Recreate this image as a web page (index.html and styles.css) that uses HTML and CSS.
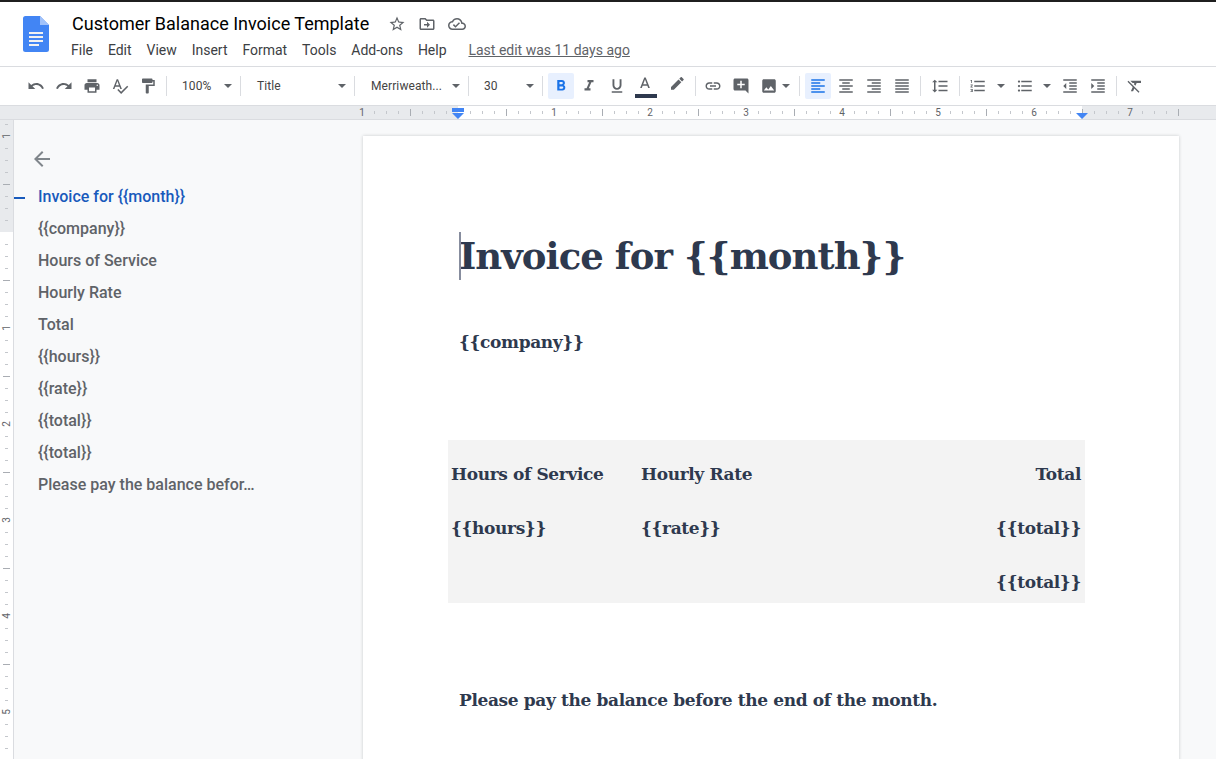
FILE: index.html
```html
<!DOCTYPE html>
<html lang="en">
<head>
  <meta charset="UTF-8" />
  <title>Customer Balanace Invoice Template - Google Docs</title>
  <link rel="stylesheet" href="styles.css">
</head>
<body>

  <header class="titlebar">
    <svg class="doc-logo" viewBox="0 0 26 36" width="26" height="36">
      <path fill="#4285f4" d="M2.5 0H17l9 9v24.5a2.5 2.5 0 0 1-2.5 2.5h-21A2.5 2.5 0 0 1 0 33.500v-31A2.500 2.500 0 0 1 2.500 0z"/>
      <path fill="#a1c2fa" d="M17 0l9 9h-9z"/>
      <path fill="#f1f1f1" d="M6 16h14v2H6zM6 20h14v2H6zM6 24h14v2H6zM6 28h10v2H6z"/>
    </svg>
    <div class="titlebar-main">
      <div class="doc-title-row">
        <span class="doc-title">Customer Balanace Invoice Template</span>
        <svg class="title-icon star" viewBox="0 0 24 24"><path d="M22 9.240l-7.190-.62L12 2 9.190 8.630 2 9.240l5.460 4.730L5.820 21 12 17.270 18.180 21l-1.630-7.030L22 9.240zM12 15.400l-3.760 2.270 1-4.280-3.320-2.880 4.380-.38L12 6.100l1.710 4.040 4.380.38-3.320 2.880 1 4.280L12 15.400z"/></svg>
        <svg class="title-icon" viewBox="0 0 24 24"><path d="M20 6h-8l-2-2H4c-1.100 0-2 .9-2 2v12c0 1.100.9 2 2 2h16c1.100 0 2-.9 2-2V8c0-1.100-.9-2-2-2zm0 12H4V6h5.170l2 2H20v10zm-8-1l4-4-4-4v3H8v2h4v3z"/></svg>
        <svg class="title-icon" viewBox="0 0 24 24"><path d="M19.350 10.040C18.670 6.590 15.640 4 12 4 9.110 4 6.600 5.640 5.350 8.040 2.340 8.360 0 10.910 0 14c0 3.310 2.690 6 6 6h13c2.760 0 5-2.240 5-5 0-2.640-2.050-4.780-4.650-4.960zM19 18H6c-2.210 0-4-1.790-4-4 0-2.050 1.530-3.760 3.560-3.970l1.070-.11.5-.95C8.080 7.140 9.940 6 12 6c2.620 0 4.880 1.860 5.390 4.430l.3 1.500 1.530.11c1.560.1 2.780 1.410 2.780 2.960 0 1.650-1.350 3-3 3zm-9-3.820l-2.090-2.090L6.500 13.500 10 17l6.010-6.010-1.410-1.410z"/></svg>
      </div>
      <nav class="menubar">
        <a>File</a>
        <a>Edit</a>
        <a>View</a>
        <a>Insert</a>
        <a>Format</a>
        <a>Tools</a>
        <a>Add-ons</a>
        <a>Help</a>
        <a class="last-edit">Last edit was 11 days ago</a>
      </nav>
    </div>
  </header>

  <div class="toolbar">
    <button class="tb"><svg viewBox="0 0 24 24"><path d="M12.500 8c-2.650 0-5.050.99-6.900 2.600L2 7v9h9l-3.620-3.620c1.390-1.160 3.160-1.880 5.120-1.880 3.540 0 6.550 2.310 7.600 5.500l2.370-.78C21.080 11.030 17.150 8 12.500 8z"/></svg></button>
    <button class="tb"><svg viewBox="0 0 24 24"><path d="M18.400 10.600C16.550 8.990 14.150 8 11.500 8c-4.650 0-8.580 3.030-9.960 7.220L3.900 16c1.050-3.190 4.050-5.500 7.600-5.500 1.950 0 3.730.72 5.120 1.880L13 16h9V7l-3.600 3.600z"/></svg></button>
    <button class="tb"><svg viewBox="0 0 24 24"><path d="M19 8H5c-1.660 0-3 1.340-3 3v6h4v4h12v-4h4v-6c0-1.660-1.340-3-3-3zm-3 11H8v-5h8v5zm3-7c-.55 0-1-.45-1-1s.45-1 1-1 1 .45 1 1-.45 1-1 1zm-1-9H6v4h12V3z"/></svg></button>
    <button class="tb"><svg viewBox="0 0 24 24"><path d="M12.450 16h2.090L9.430 3H7.570L2.460 16h2.090l1.120-3h5.640l1.140 3zm-6.020-5L8.500 5.480 10.570 11H6.430zm15.160.59l-8.090 8.090L9.830 16l-1.410 1.410 5.090 5.090L23 13l-1.410-1.410z"/></svg></button>
    <button class="tb"><svg viewBox="0 0 24 24"><path d="M18 4V3c0-.55-.45-1-1-1H5c-.55 0-1 .45-1 1v4c0 .55.45 1 1 1h12c.55 0 1-.45 1-1V6h1v4H9v11c0 .55.45 1 1 1h2c.55 0 1-.45 1-1v-9h8V4h-3z"/></svg></button>
    <span class="sep sep-left"></span>
    <div class="select w-zoom"><span>100%</span><i class="caret"></i></div>
    <span class="sep"></span>
    <div class="select w-wide"><span>Title</span><i class="caret"></i></div>
    <span class="sep"></span>
    <div class="select w-wide"><span>Merriweath...</span><i class="caret"></i></div>
    <span class="sep"></span>
    <div class="select w-zoom"><span>30</span><i class="caret"></i></div>
    <span class="sep sep-right"></span>
    <button class="tb active"><svg viewBox="0 0 24 24"><path d="M15.600 10.790c.97-.67 1.650-1.770 1.650-2.790 0-2.260-1.750-4-4-4H7v14h7.040c2.090 0 3.710-1.700 3.710-3.790 0-1.520-.86-2.820-2.150-3.420zM10 6.500h3c.83 0 1.500.67 1.500 1.500s-.67 1.500-1.500 1.500h-3v-3zm3.500 9H10v-3h3.500c.83 0 1.500.67 1.500 1.500s-.67 1.500-1.500 1.500z"/></svg></button>
    <button class="tb"><svg viewBox="0 0 24 24"><path d="M10 4v3h2.210l-3.420 8H6v3h8v-3h-2.210l3.420-8H18V4z"/></svg></button>
    <button class="tb"><svg viewBox="0 0 24 24"><path d="M12 17c3.310 0 6-2.690 6-6V3h-2.500v8c0 1.930-1.570 3.500-3.500 3.500S8.500 12.930 8.500 11V3H6v8c0 3.310 2.690 6 6 6zm-7 2v2h14v-2H5z"/></svg></button>
    <button class="tb text-color"><svg viewBox="0 0 24 24"><path d="M11 2L5.500 16h2.250l1.120-3h6.250l1.120 3h2.250L13 2h-2zm-1.380 9L12 4.670 14.380 11H9.620z"/></svg><i class="color-bar"></i></button>
    <button class="tb highlight"><svg viewBox="0 0 24 24"><path d="M17.750 7L14 3.250l-10 10V17h3.750l10-10zm2.960-2.960c.39-.39.39-1.020 0-1.410L18.370.29c-.39-.39-1.020-.39-1.410 0L15 2.250 18.750 6l1.960-1.960z"/></svg></button>
    <span class="sep sep-marker"></span>
    <button class="tb"><svg viewBox="0 0 24 24"><path d="M3.900 12c0-1.710 1.390-3.100 3.100-3.100h4V7H7c-2.760 0-5 2.240-5 5s2.240 5 5 5h4v-1.900H7c-1.710 0-3.100-1.390-3.100-3.100zM8 13h8v-2H8v2zm9-6h-4v1.900h4c1.710 0 3.100 1.390 3.100 3.100s-1.390 3.100-3.100 3.100h-4V17h4c2.760 0 5-2.240 5-5s-2.240-5-5-5z"/></svg></button>
    <button class="tb"><svg viewBox="0 0 24 24"><path d="M21.990 4c0-1.100-.89-2-1.990-2H4c-1.100 0-2 .9-2 2v12c0 1.100.9 2 2 2h14l4 4-.01-18zM17 11h-4v4h-2v-4H7V9h4V5h2v4h4v2z"/></svg></button>
    <button class="tb"><svg viewBox="0 0 24 24"><path d="M21 19V5c0-1.100-.9-2-2-2H5c-1.100 0-2 .9-2 2v14c0 1.100.9 2 2 2h14c1.100 0 2-.9 2-2zM8.500 13.500l2.500 3.010L14.500 12l4.500 6H5l3.500-4.500z"/></svg></button>
    <i class="caret caret-inline"></i>
    <span class="sep sep-img"></span>
    <button class="tb active"><svg viewBox="0 0 24 24"><path d="M15 15H3v2h12v-2zm0-8H3v2h12V7zM3 13h18v-2H3v2zm0 8h18v-2H3v2zM3 3v2h18V3H3z"/></svg></button>
    <button class="tb"><svg viewBox="0 0 24 24"><path d="M7 15v2h10v-2H7zm-4 6h18v-2H3v2zm0-8h18v-2H3v2zm4-6v2h10V7H7zM3 3v2h18V3H3z"/></svg></button>
    <button class="tb"><svg viewBox="0 0 24 24"><path d="M3 21h18v-2H3v2zm6-4h12v-2H9v2zm-6-4h18v-2H3v2zm6-4h12V7H9v2zM3 3v2h18V3H3z"/></svg></button>
    <button class="tb"><svg viewBox="0 0 24 24"><path d="M3 21h18v-2H3v2zm0-4h18v-2H3v2zm0-4h18v-2H3v2zm0-4h18V7H3v2zm0-6v2h18V3H3z"/></svg></button>
    <span class="sep sep-both"></span>
    <button class="tb tb-spacing"><svg viewBox="0 0 24 24"><path d="M6 7h2.500L5 3.500 1.500 7H4v10H1.500L5 20.500 8.500 17H6V7zm4-2v2h12V5H10zm0 14h12v-2H10v2zm0-6h12v-2H10v2z"/></svg></button>
    <span class="sep sep-both"></span>
    <button class="tb"><svg viewBox="0 0 24 24"><path d="M2 17h2v.5H3v1h1v.5H2v1h3v-4H2v1zm1-9h1V4H2v1h1v3zm-1 3h1.800L2 13.100v.9h3v-1H3.200L5 10.900V10H2v1zm5-6v2h14V5H7zm0 14h14v-2H7v2zm0-6h14v-2H7v2z"/></svg></button>
    <i class="caret caret-list"></i>
    <button class="tb"><svg viewBox="0 0 24 24"><path d="M4 10.500c-.83 0-1.500.67-1.500 1.500s.67 1.500 1.500 1.500 1.500-.67 1.500-1.500-.67-1.500-1.500-1.500zm0-6c-.83 0-1.500.67-1.500 1.500S3.170 7.500 4 7.500 5.500 6.830 5.500 6 4.830 4.500 4 4.500zm0 12c-.83 0-1.500.68-1.500 1.500s.68 1.500 1.500 1.500 1.500-.68 1.500-1.500-.67-1.500-1.500-1.500zM7 19h14v-2H7v2zm0-6h14v-2H7v2zm0-8v2h14V5H7z"/></svg></button>
    <i class="caret caret-bullets"></i>
    <button class="tb"><svg viewBox="0 0 24 24"><path d="M11 17h10v-2H11v2zm-8-5l4 4V8l-4 4zm0 9h18v-2H3v2zM3 3v2h18V3H3zm8 6h10V7H11v2zm0 4h10v-2H11v2z"/></svg></button>
    <button class="tb"><svg viewBox="0 0 24 24"><path d="M3 21h18v-2H3v2zM3 8v8l4-4-4-4zm8 9h10v-2H11v2zM3 3v2h18V3H3zm8 6h10V7H11v2zm0 4h10v-2H11v2z"/></svg></button>
    <span class="sep sep-both"></span>
    <button class="tb"><svg viewBox="0 0 24 24"><path d="M3.270 5L2 6.270l6.970 6.970L6.500 19h3l1.570-3.660L16.730 21 18 19.730 3.550 5.270 3.270 5zM6 5v.18L8.820 8h2.400l-.72 1.680 2.100 2.100L14.210 8H20V5H6z"/></svg></button>
  </div>

  <div class="h-ruler">
    <svg width="1216" height="13">
      <defs>
        <pattern id="hticks" x="74" y="0" width="96" height="13" patternUnits="userSpaceOnUse">
          <path stroke="#c4c7cc" d="M12.500 5v3M24.500 5v3M36.500 5v3M60.500 5v3M72.500 5v3M84.500 5v3"/>
          <path stroke="#a9adb3" d="M48.500 3v7"/>
        </pattern>
      </defs>
      <rect x="458" y="0" width="624" height="13" fill="#fff"/>
      <rect x="363" y="0" width="816" height="13" fill="url(#hticks)"/>
      <g class="ruler-num">
        <text x="362" y="10">1</text>
        <text x="554" y="10">1</text>
        <text x="650" y="10">2</text>
        <text x="746" y="10">3</text>
        <text x="842" y="10">4</text>
        <text x="938" y="10">5</text>
        <text x="1034" y="10">6</text>
        <text x="1130" y="10">7</text>
      </g>
      <rect x="452" y="2" width="12" height="4" fill="#4285f4"/>
      <path fill="#4285f4" d="M452 7h12l-6 6zM1076 7h12l-6 6z"/>
    </svg>
  </div>

  <div class="workspace">
    <div class="v-ruler">
      <svg width="13" height="640">
        <defs>
          <pattern id="vticks" x="0" y="16" width="13" height="96" patternUnits="userSpaceOnUse">
            <path stroke="#c4c7cc" d="M5 12.500h3M5 24.500h3M5 36.500h3M5 60.500h3M5 72.500h3M5 84.500h3"/>
            <path stroke="#a9adb3" d="M3 48.500h7"/>
          </pattern>
        </defs>
        <rect x="0" y="112" width="13" height="528" fill="#fff"/>
        <rect x="0" y="0" width="13" height="640" fill="url(#vticks)"/>
        <g class="ruler-num">
          <text transform="translate(10 16) rotate(-90)">1</text>
          <text transform="translate(10 208) rotate(-90)">1</text>
          <text transform="translate(10 304) rotate(-90)">2</text>
          <text transform="translate(10 400) rotate(-90)">3</text>
          <text transform="translate(10 496) rotate(-90)">4</text>
          <text transform="translate(10 592) rotate(-90)">5</text>
        </g>
      </svg>
    </div>

    <aside class="outline">
      <svg class="outline-back" viewBox="0 0 24 24"><path d="M20 11H7.830l5.590-5.590L12 4l-8 8 8 8 1.410-1.410L7.830 13H20v-2z"/></svg>
      <ul>
        <li class="current">Invoice for {{month}}</li>
        <li>{{company}}</li>
        <li>Hours of Service</li>
        <li>Hourly Rate</li>
        <li>Total</li>
        <li>{{hours}}</li>
        <li>{{rate}}</li>
        <li>{{total}}</li>
        <li>{{total}}</li>
        <li>Please pay the balance befor…</li>
      </ul>
    </aside>

    <main class="page">
      <h1><span class="cursor"></span>Invoice for {{month}}</h1>
      <h2>{{company}}</h2>
      <table class="invoice">
        <tr><td class="c1">Hours of Service</td><td class="c2">Hourly Rate</td><td class="c3">Total</td></tr>
        <tr><td class="c1">{{hours}}</td><td class="c2">{{rate}}</td><td class="c3">{{total}}</td></tr>
        <tr class="last-row"><td class="c1"></td><td class="c2"></td><td class="c3">{{total}}</td></tr>
      </table>
      <p class="closing">Please pay the balance before the end of the month.</p>
    </main>
  </div>

</body>
</html>
```
FILE: styles.css
```css
* {
  box-sizing: border-box;
}

html, body {
  height: 759px;
}

body {
  margin: 0;
  overflow: hidden;
  background-color: #f8f9fa;
  font-family: Roboto, sans-serif;
  border-top: 2px solid #1f1f1f;
}

/* title + menus */
.titlebar {
  display: flex;
  height: 65px;
  background-color: #fff;
  border-bottom: 1px solid #dadce0;
}

.doc-logo {
  margin: 14px 0 0 23px;
}

.titlebar-main {
  margin-left: 23px;
}

.doc-title-row {
  display: flex;
  align-items: center;
  height: 27px;
  margin-top: 8px;
}

.doc-title {
  font-size: 18px;
  color: #000;
  margin-right: 19px;
}

.title-icon {
  width: 18px;
  height: 18px;
  fill: #5f6368;
  margin-right: 12px;
  margin-top: 1px;
}

.menubar {
  display: flex;
  margin-top: 4px;
  margin-left: -1px;
  font-size: 14px;
  line-height: 18px;
  color: #3c4043;
}

.menubar a {
  margin-right: 14.9px;
}

.menubar a.last-edit {
  margin-left: 7px;
  margin-right: 0;
  color: #5f6368;
  text-decoration: underline;
}

/* toolbar */
.toolbar {
  display: flex;
  align-items: center;
  height: 39px;
  padding-left: 22px;
  background-color: #fff;
  border-bottom: 1px solid #dadce0;
}

.tb {
  position: relative;
  display: flex;
  align-items: center;
  justify-content: center;
  width: 28px;
  height: 26px;
  padding: 0;
  border: none;
  border-radius: 2px;
  background: transparent;
}

.tb svg {
  width: 18px;
  height: 18px;
  fill: #5f6368;
}

.tb.active {
  width: 26px;
  margin: 0 1px;
  background-color: #e8f0fe;
}

.tb.active svg {
  fill: #1a73e8;
}

.text-color svg {
  margin-top: -3px;
}

.color-bar {
  position: absolute;
  left: 4px;
  bottom: 1px;
  width: 22px;
  height: 4px;
  background-color: #2e394e;
}

.highlight {
  margin-left: 4px;
}

.sep {
  width: 1px;
  height: 20px;
  background-color: #dadce0;
  flex-shrink: 0;
}

.sep-left {
  margin-left: 4px;
}

.sep-right {
  margin-right: 4px;
}

.sep-both {
  margin: 0 4px;
}

.sep-marker {
  margin: 0 3px 0 4px;
}

.sep-img {
  margin: 0 4px 0 9px;
}

.select {
  display: flex;
  align-items: center;
  height: 26px;
  padding: 0 8px 0 15px;
  font-size: 12px;
  letter-spacing: 0.1px;
}

.select span {
  color: #444;
}

.w-zoom {
  width: 73px;
}

.w-wide {
  width: 113px;
  padding-left: 16px;
}

.caret {
  width: 0;
  height: 0;
  margin-left: auto;
  border-left: 4px solid transparent;
  border-right: 4px solid transparent;
  border-top: 4px solid #5f6368;
}

.caret-inline {
  margin-left: -1px;
}

.tb-spacing {
  margin: 0 1px;
}

.caret-list {
  margin-left: 5px;
  margin-right: 6px;
}

.caret-bullets {
  margin-left: 4px;
  margin-right: 5px;
}

/* rulers */
.h-ruler {
  height: 14px;
  background-color: #e8eaed;
  border-bottom: 1px solid #dadce0;
}

.h-ruler svg, .v-ruler svg {
  display: block;
}

.ruler-num {
  font-family: Roboto, sans-serif;
  font-size: 10px;
  fill: #5f6368;
  text-anchor: middle;
}

.workspace {
  display: flex;
  height: 640px;
}

.v-ruler {
  flex: 0 0 14px;
  background-color: #e8eaed;
  border-right: 1px solid #dadce0;
}

/* document outline */
.outline {
  flex: 0 0 349px;
  position: relative;
  padding: 27px 0 0 24px;
}

.outline-back {
  display: block;
  width: 24px;
  height: 24px;
  margin-left: -8px;
  fill: #80868b;
}

.outline ul {
  list-style: none;
  margin: 10px 0 0;
  padding: 0;
}

.outline li {
  height: 32px;
  line-height: 32px;
  font-size: 16px;
  font-weight: 500;
  color: #5f6368;
  white-space: nowrap;
}

.outline li.current {
  color: #185abc;
  position: relative;
}

.outline li.current::before {
  content: "";
  position: absolute;
  left: -24px;
  top: 16px;
  width: 11px;
  height: 2px;
  background-color: #185abc;
}

/* the document */
.page {
  flex: 0 0 816px;
  min-width: 0;
  height: 660px;
  margin-top: 16px;
  padding: 96px 96px 0;
  background-color: #fff;
  box-shadow: 0 0 3px rgba(60, 64, 67, 0.25);
  font-family: "DejaVu Serif", serif;
  font-weight: bold;
  color: #2e394e;
}

h1 {
  position: relative;
  margin: 0;
  font-size: 37px;
  line-height: 48px;
  letter-spacing: -0.95px;
  white-space: nowrap;
}

.cursor {
  position: absolute;
  left: 0;
  top: 0;
  width: 2px;
  height: 48px;
  background-color: #878d9e;
}

h2 {
  margin: 47px 0 0;
  font-size: 17px;
  line-height: 30px;
  letter-spacing: -0.37px;
}

.invoice {
  width: 637px;
  margin: 83px 0 0 -11px;
  border-collapse: collapse;
  background-color: #f3f3f3;
  font-size: 17px;
  letter-spacing: -0.37px;
}

.invoice td {
  height: 54px;
  padding: 14px 4px 0 3px;
}

.invoice .last-row td {
  height: 55px;
  padding-top: 13px;
}

.c1 {
  width: 190px;
}

.c3 {
  text-align: right;
}

.closing {
  margin: 82px 0 0;
  font-size: 17px;
  line-height: 30px;
  letter-spacing: -0.37px;
}
```
